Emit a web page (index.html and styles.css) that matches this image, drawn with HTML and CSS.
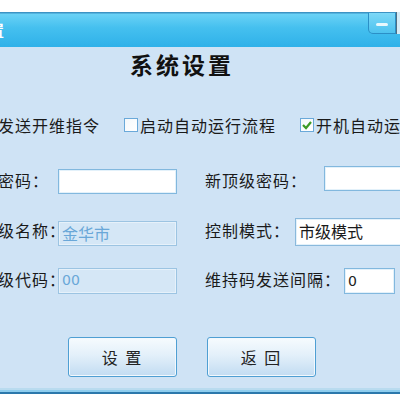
FILE: index.html
```html
<!DOCTYPE html>
<html lang="zh-CN">
<head>
  <meta charset="UTF-8">
  <title>系统设置</title>
  <link rel="stylesheet" href="styles.css">
</head>
<body>
  <div class="window">
    <div class="titlebar">
      <span class="title">系统设置</span>
      <div class="btn-min"><span class="dash"></span></div>
      <div class="btn-close"></div>
    </div>

    <div class="content">
      <h1>系统设置</h1>

      <div class="form">
        <div class="check-row">
          <label class="check first">发送开维指令</label>
          <label class="check"><span class="box"></span>启动自动运行流程</label>
          <label class="check"><span class="box checked">
            <svg width="12" height="12" viewBox="0 0 12 12"><polyline points="2,6 5,9 10,3" fill="none" stroke="#3b9a25" stroke-width="2.2"/></svg>
          </span>开机自动运行</label>
        </div>

        <div class="row row-pass">
          <span class="label">原密码：</span>
          <div class="input in-1"></div>
          <span class="label label-r w-pass">新顶级密码：</span>
          <div class="input in-up"></div>
        </div>

        <div class="row">
          <span class="label">顶级名称：</span>
          <div class="input in-1 disabled">金华市</div>
          <span class="label label-r w-mode">控制模式：</span>
          <div class="input select">市级模式</div>
        </div>

        <div class="row row-code">
          <span class="label">顶级代码：</span>
          <div class="input in-1 disabled small">00</div>
          <span class="label label-r w-gap">维持码发送间隔：</span>
          <div class="input in-short small">0</div>
        </div>

        <div class="buttons">
          <button type="button" class="btn">设 置</button>
          <button type="button" class="btn">返 回</button>
        </div>
      </div>
    </div>

    <div class="bottom">
      <div class="b1"></div>
      <div class="b2"></div>
      <div class="b3"></div>
    </div>
  </div>
</body>
</html>
```

FILE: styles.css
```css
body {
  margin: 0;
  background: #fff;
  font-family: "Noto Sans CJK SC", "DejaVu Sans", sans-serif;
  width: 400px;
  height: 400px;
  overflow: hidden;
}

.window {
  margin-top: 12px;
  width: 400px;
  overflow: hidden;
}

/* 标题栏 */
.titlebar {
  height: 35px;
  display: flex;
  align-items: flex-start;
  background: linear-gradient(#3c93c4 0, #3c93c4 1px, #6ad2f6 2px, #45c0ef 45%, #2fb1e9 100%);
  overflow: hidden;
}

.title {
  margin-left: -56px;
  margin-top: 8px;
  color: #fff;
  font-size: 15px;
  font-weight: bold;
  line-height: 20px;
  white-space: nowrap;
}

.btn-min {
  margin-left: auto;
  margin-top: 1px;
  width: 26px;
  height: 20px;
  border: 1px solid #2b8fc6;
  border-top: none;
  border-radius: 0 0 0 5px;
  background: linear-gradient(#7dd8f7, #4cc2ef);
  display: flex;
  align-items: center;
  justify-content: center;
  flex-shrink: 0;
}

.dash {
  width: 12px;
  height: 3px;
  border-radius: 2px;
  background: #e8f8fd;
  margin-top: 2px;
}

.btn-close {
  width: 30px;
  height: 22px;
  flex-shrink: 0;
  margin-right: -27px;
  border-left: 1px solid #4f6f82;
  background: #d7ecf7;
}

/* 内容 */
.content {
  height: 341px;
  background: #cfe3f5;
  overflow: hidden;
}

h1 {
  margin: 3px 0 0 0;
  padding-left: 130px;
  height: 28px;
  line-height: 28px;
  font-size: 23px;
  letter-spacing: 3px;
  font-weight: bold;
  color: #111;
}

.form {
  margin-left: -19px;
  font-size: 16px;
  letter-spacing: 1px;
  color: #1a1a1a;
}

.check-row {
  margin-top: 37px;
  height: 20px;
  display: flex;
  align-items: center;
  white-space: nowrap;
}

.check {
  display: flex;
  align-items: center;
  line-height: 20px;
  margin-left: 22px;
}

.check.first {
  margin-left: 17px;
}

.check + .check {
  margin-left: 24px;
}

.box {
  width: 12px;
  height: 12px;
  border: 1px solid #6aa9d9;
  background: linear-gradient(135deg, #f4f8fb, #fff);
  margin-right: 2px;
  display: flex;
  align-items: center;
  justify-content: center;
}

.box svg {
  display: block;
}

.row {
  margin-top: 24px;
  height: 28px;
  display: flex;
  align-items: center;
  white-space: nowrap;
}

.row-pass {
  margin-top: 31px;
}

.row-code {
  margin-top: 22px;
  height: 26px;
}

.label {
  width: 77px;
  flex-shrink: 0;
  overflow: hidden;
  line-height: 22px;
  margin-top: -4px;
}

.row-pass .label {
  margin-top: -1px;
}

.label-r {
  margin-left: 28px;
}

.w-pass { width: 119px; }
.w-mode { width: 90px; }
.w-gap  { width: 139px; }

.input {
  box-sizing: border-box;
  height: 25px;
  border: 1px solid #82b8de;
  box-shadow: inset 0 0 0 1px #e3f1fa;
  background: #fff;
  flex-shrink: 0;
  padding-left: 3px;
  line-height: 22px;
  font-size: 16px;
  letter-spacing: 0;
}

.in-1 {
  width: 119px;
  margin-top: 3px;
}

.in-up {
  width: 90px;
  margin-top: -3px;
}

.disabled {
  background: #d5e7f6;
  border-color: #9cc4e2;
  box-shadow: inset 0 0 0 1px #e6f1fa;
  color: #6aa7d8;
}

.small {
  font-size: 14px;
  font-family: "DejaVu Sans", sans-serif;
}

.select {
  width: 120px;
  height: 28px;
  line-height: 25px;
  color: #1a1a1a;
  border-color: #8ab9dc;
}

.in-short {
  width: 51px;
  height: 26px;
  line-height: 24px;
  color: #222;
}

.row-code .in-1 {
  height: 26px;
  margin-top: 0;
}

.buttons {
  margin-top: 43px;
  padding-left: 87px;
  display: flex;
  gap: 30px;
}

.btn {
  width: 109px;
  height: 40px;
  border: 1px solid #4f9fd3;
  border-radius: 3px;
  background: linear-gradient(#f6fbfe, #e3f0fa 45%, #c2dcf2);
  box-shadow: inset 0 0 0 1px #f2f8fd;
  font-family: "Noto Sans CJK SC", sans-serif;
  font-size: 16px;
  letter-spacing: 2px;
  color: #222;
  padding: 0;
}

/* 底部边框 */
.bottom .b1 {
  height: 2px;
  background: #b9dbef;
}

.bottom .b2 {
  height: 2px;
  background: #8ecdee;
}

.bottom .b3 {
  height: 2px;
  background: #2b78ab;
}
```
